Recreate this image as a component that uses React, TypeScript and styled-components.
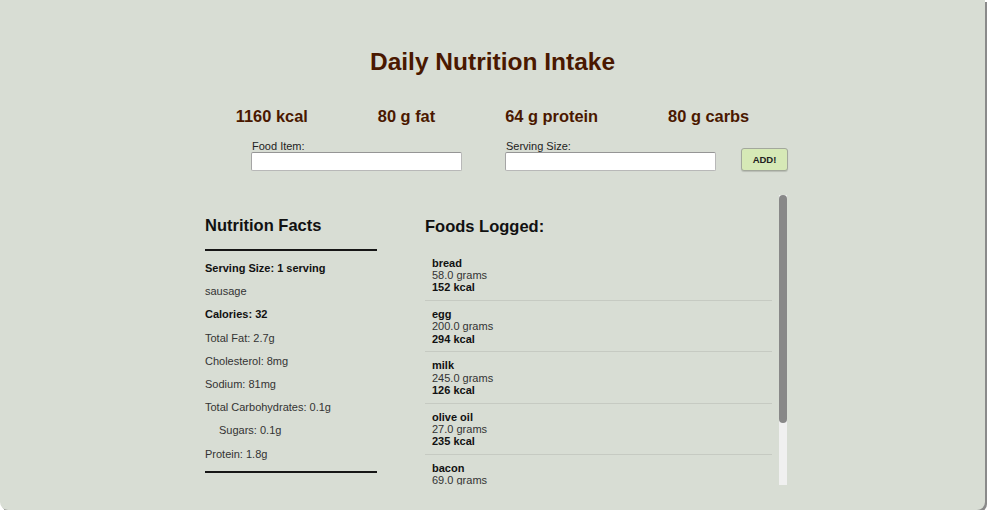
import React, { useLayoutEffect, useRef, useState } from 'react';
import styled, { createGlobalStyle } from 'styled-components';

const GlobalStyle = createGlobalStyle`
  html, body { margin: 0; padding: 0; background: #ffffff; }
  body { font-family: "Liberation Sans", Arial, sans-serif; }
  * { box-sizing: border-box; }
`;

const Card = styled.div`
  width: 985px;
  height: 510px;
  background: #d8ddd4;
  border-radius: 0 0 8px 8px;
  box-shadow: 2px 2px 0 #8a8a8a;
  padding-top: 48px;
  overflow: hidden;
`;

const Title = styled.h1`
  margin: 0;
  text-align: center;
  font-size: 24.5px;
  font-weight: bold;
  line-height: normal;
  color: #4a1800;
`;

const Stats = styled.div`
  display: flex;
  justify-content: center;
  gap: 70px;
  margin-top: 30.7px;
`;

const Stat = styled.div`
  font-size: 16.4px;
  font-weight: bold;
  line-height: normal;
  color: #4a1800;
`;

const Form = styled.form`
  display: flex;
  justify-content: center;
  align-items: flex-end;
  padding-left: 54px;
  margin-top: 14px;
`;

const Field = styled.label<{ $spacing: number }>`
  display: flex;
  flex-direction: column;
  margin-right: ${(p) => p.$spacing}px;
`;

const LabelText = styled.span`
  font-size: 11px;
  line-height: normal;
  color: #222;
  padding-left: 1px;
`;

const Input = styled.input`
  width: 211px;
  height: 19.5px;
  margin: 0;
  background: #ffffff;
  border: 1px solid #b8b8b8;
  border-top-color: #959595;
  border-left-color: #a5a5a5;
  border-radius: 2px;
  font: 11px "Liberation Sans", Arial, sans-serif;
`;

const AddButton = styled.button`
  width: 47px;
  height: 22.5px;
  margin: 0 0 0.5px;
  padding: 0;
  background: #d6e9b6;
  border: 1px solid #a3a89c;
  border-radius: 3px;
  box-shadow: 0 1px 1px rgba(0, 0, 0, 0.15);
  font: bold 9.5px "Liberation Sans", Arial, sans-serif;
  color: #222;
`;

const Main = styled.div`
  display: flex;
  justify-content: center;
  align-items: flex-start;
  gap: 48px;
  padding-left: 7px;
  margin-top: 24.3px;
`;

const Facts = styled.section`
  width: 172px;
  padding-top: 20.5px;
`;

const SectionTitle = styled.h2`
  margin: 0;
  font-size: 16.5px;
  font-weight: bold;
  line-height: normal;
  color: #111;
`;

const FactsTitle = styled(SectionTitle)`
  padding-bottom: 14.5px;
  border-bottom: 2px solid #161616;
`;

const FactsList = styled.div`
  display: flex;
  flex-direction: column;
  gap: 10.2px;
  padding: 10.6px 0 10.4px;
  border-bottom: 2px solid #161616;
`;

const FactRow = styled.div<{ $bold?: boolean; $indent?: boolean }>`
  font-size: 11px;
  line-height: 13px;
  color: ${(p) => (p.$bold ? '#111' : '#333')};
  font-weight: ${(p) => (p.$bold ? 'bold' : 'normal')};
  padding-left: ${(p) => (p.$indent ? '14px' : '0')};
`;

const Logged = styled.section`
  display: flex;
  width: 362px;
  height: 290px;
`;

const LoggedScroll = styled.div`
  flex: 1;
  height: 100%;
  overflow-y: auto;
  padding: 21.3px 0 8px;
  scrollbar-width: none;
  &::-webkit-scrollbar {
    display: none;
  }
`;

const ScrollTrack = styled.div`
  width: 8px;
  height: 100%;
  background: #f0f0f0;
  flex-shrink: 0;
`;

const ScrollThumb = styled.div`
  width: 100%;
  background: #888888;
  border-radius: 4px;
`;

const LoggedTitle = styled(SectionTitle)`
  margin-bottom: 13.7px;
`;

const FoodList = styled.ul`
  list-style: none;
  margin: 0 7px 0 0;
  padding: 0;
`;

const FoodItem = styled.li`
  padding: 7.2px 7px 6.3px;
  border-bottom: 1px solid #c6cac2;
  font-size: 11px;
  line-height: 12.3px;
  color: #333;
`;

const FoodName = styled.div`
  font-weight: bold;
  color: #111;
`;

const FoodKcal = styled.div`
  font-weight: bold;
  color: #111;
`;

const foods = [
  { name: 'bread', grams: '58.0', kcal: 152 },
  { name: 'egg', grams: '200.0', kcal: 294 },
  { name: 'milk', grams: '245.0', kcal: 126 },
  { name: 'olive oil', grams: '27.0', kcal: 235 },
  { name: 'bacon', grams: '69.0', kcal: 321 },
  { name: 'sausage', grams: '12.0', kcal: 32 },
];

const facts: { text: string; bold?: boolean; indent?: boolean }[] = [
  { text: 'Serving Size: 1 serving', bold: true },
  { text: 'sausage' },
  { text: 'Calories: 32', bold: true },
  { text: 'Total Fat: 2.7g' },
  { text: 'Cholesterol: 8mg' },
  { text: 'Sodium: 81mg' },
  { text: 'Total Carbohydrates: 0.1g' },
  { text: 'Sugars: 0.1g', indent: true },
  { text: 'Protein: 1.8g' },
];

export default function App() {
  const scrollRef = useRef<HTMLDivElement>(null);
  const [thumb, setThumb] = useState(227);

  useLayoutEffect(() => {
    const el = scrollRef.current;
    if (el && el.scrollHeight > 0) {
      setThumb((el.clientHeight / el.scrollHeight) * el.clientHeight);
    }
  }, []);

  return (
    <>
      <GlobalStyle />
      <Card>
        <Title>Daily Nutrition Intake</Title>
        <Stats>
          <Stat>1160 kcal</Stat>
          <Stat>80 g fat</Stat>
          <Stat>64 g protein</Stat>
          <Stat>80 g carbs</Stat>
        </Stats>
        <Form onSubmit={(e) => e.preventDefault()}>
          <Field $spacing={43}>
            <LabelText>Food Item:</LabelText>
            <Input type="text" />
          </Field>
          <Field $spacing={25}>
            <LabelText>Serving Size:</LabelText>
            <Input type="text" />
          </Field>
          <AddButton type="submit">ADD!</AddButton>
        </Form>
        <Main>
          <Facts>
            <FactsTitle>Nutrition Facts</FactsTitle>
            <FactsList>
              {facts.map((f) => (
                <FactRow key={f.text} $bold={f.bold} $indent={f.indent}>
                  {f.text}
                </FactRow>
              ))}
            </FactsList>
          </Facts>
          <Logged>
            <LoggedScroll ref={scrollRef}>
              <LoggedTitle>Foods Logged:</LoggedTitle>
              <FoodList>
                {foods.map((f) => (
                  <FoodItem key={f.name}>
                    <FoodName>{f.name}</FoodName>
                    <div>{f.grams} grams</div>
                    <FoodKcal>{f.kcal} kcal</FoodKcal>
                  </FoodItem>
                ))}
              </FoodList>
            </LoggedScroll>
            <ScrollTrack>
              <ScrollThumb style={{ height: `${thumb}px` }} />
            </ScrollTrack>
          </Logged>
        </Main>
      </Card>
    </>
  );
}
